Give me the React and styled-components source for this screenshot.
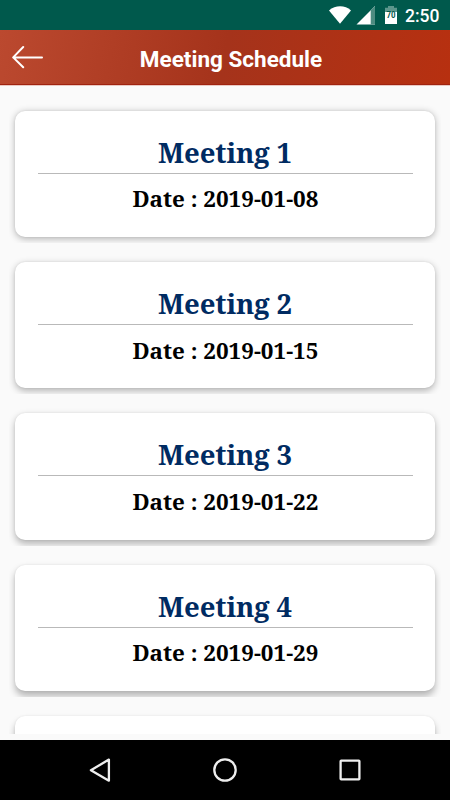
import styled, { createGlobalStyle } from "styled-components";

const meetings = [
  { id: 1, title: "Meeting 1", date: "2019-01-08", drop: 1.5 },
  { id: 2, title: "Meeting 2", date: "2019-01-15", drop: 2.5 },
  { id: 3, title: "Meeting 3", date: "2019-01-22", drop: 3.5 },
  { id: 4, title: "Meeting 4", date: "2019-01-29", drop: 4.5 },
];

const App = () => {
  return (
    <Screen>
      <GlobalStyle />
      <StatusBar>
        <StatusIcons viewBox="0 0 74 30">
          <path d="M1 10.4C7.4 4.9 17 4.9 23 10.4L12 23.7Z" fill="#fff" />
          <path d="M47 6V24.5H28.5Z" fill="#fff" />
          <path d="M47 6V24.5H42.7V10.3Z" fill="#4d8c81" />
          <path d="M57 7.8H60V6H66V7.8H69V12H57Z" fill="#5c968c" />
          <path d="M57 12H69V24H57Z" fill="#fff" />
          <text x="63" y="18.4" textLength="9" lengthAdjust="spacingAndGlyphs">
            70
          </text>
        </StatusIcons>
        <Clock>2:50</Clock>
      </StatusBar>
      <Header>
        <BackIcon viewBox="0 0 32 24">
          <path d="M30 12.4H1.2M11.2 2L1.2 12.4L11.2 22.2" />
        </BackIcon>
        <HeaderTitle>Meeting Schedule</HeaderTitle>
      </Header>
      <List>
        {meetings.map((item) => (
          <CardWrap key={item.id}>
            <Card $drop={item.drop}>
              <Title>{item.title}</Title>
              <Hr />
              <DateText>Date : {item.date}</DateText>
            </Card>
          </CardWrap>
        ))}
        <CardWrap>
          <Card $drop={5} />
        </CardWrap>
      </List>
      <NavBar>
        <NavIcon viewBox="0 0 26 26">
          <path d="M21.9 2.6V23.7L3.9 13.2Z" />
        </NavIcon>
        <NavIcon viewBox="0 0 26 26">
          <circle cx="13" cy="13" r="10.7" />
        </NavIcon>
        <NavIcon viewBox="0 0 26 26">
          <rect x="3.6" y="3.6" width="18.8" height="18.8" rx="0.6" />
        </NavIcon>
      </NavBar>
    </Screen>
  );
};

export default App;

const GlobalStyle = createGlobalStyle`
  * {
    box-sizing: border-box;
  }
  body {
    margin: 0;
    background: #fafafa;
    font-family: Roboto, sans-serif;
  }
`;

const Screen = styled.div`
  display: flex;
  flex-direction: column;
  width: 450px;
  height: 800px;
  overflow: hidden;
  background: #fafafa;
`;

const StatusBar = styled.div`
  flex: none;
  height: 30px;
  display: flex;
  justify-content: flex-end;
  padding-right: 10px;
  background: #00594c;
`;

const StatusIcons = styled.svg`
  width: 74px;
  height: 30px;
  margin-right: 3px;

  text {
    fill: #00594c;
    font: 700 9px Roboto, sans-serif;
    text-anchor: middle;
  }
`;

const Clock = styled.span`
  width: 35px;
  color: #fff;
  font-size: 17.5px;
  font-weight: 500;
  line-height: 32px;
  white-space: nowrap;
`;

const Header = styled.header`
  flex: none;
  height: 55px;
  display: flex;
  align-items: center;
  padding: 0 12px;
  background: linear-gradient(100deg, #bb492f 0%, #a5331b 50%, #b73010 100%);
  border-bottom: 1px solid #a02310;
  box-shadow: 0 1px 0 #e9c9c2;
`;

const BackIcon = styled.svg`
  flex: none;
  width: 32px;
  height: 24px;
  fill: none;
  stroke: #fff;
  stroke-width: 2;
  stroke-linecap: round;
  stroke-linejoin: round;
`;

const HeaderTitle = styled.h1`
  flex: 1;
  margin: 3px 20px 0 0;
  color: #fff;
  font-size: 22.5px;
  font-weight: 700;
  line-height: 30px;
  text-align: center;
`;

const List = styled.main`
  flex: none;
  height: 648.5px;
  padding-top: 18.8px;
  overflow: hidden;
`;

/* crops the card shadow a few pixels under the card */
const CardWrap = styled.div`
  height: 139.2px;
  margin: 0 9px 12.1px;
  padding: 6.9px 6px 0;
  overflow: hidden;
`;

/* the shadow drops further the lower the card sits on the screen */
const Card = styled.section`
  height: 126.3px;
  padding: 22.2px 22.5px 0;
  border-radius: 10px;
  background: #fff;
  box-shadow: 0 ${(props) => props.$drop}px 7px rgba(0, 0, 0, 0.28),
    0 0 2px rgba(0, 0, 0, 0.08);
  font-family: "Noto Serif", "Droid Serif", "DejaVu Serif", serif;
  text-align: center;
`;

const Title = styled.h2`
  margin: 0;
  color: #002b62;
  font-size: 27.5px;
  font-weight: 700;
  letter-spacing: -0.1px;
  line-height: 40px;
  white-space: nowrap;
`;

const Hr = styled.hr`
  height: 1px;
  margin: 0;
  border: none;
  background: #b9b9b9;
`;

const DateText = styled.p`
  margin: 8.4px 0 0 0.8px;
  color: #000;
  font-size: 22.4px;
  font-weight: 700;
  line-height: 34px;
  white-space: nowrap;
`;

const NavBar = styled.nav`
  flex: none;
  height: 60px;
  margin-top: auto;
  display: flex;
  align-items: center;
  justify-content: space-between;
  padding: 0 87px;
  background: #000;
`;

const NavIcon = styled.svg`
  width: 26px;
  height: 26px;
  fill: none;
  stroke: #eee;
  stroke-width: 2.3;
  stroke-linejoin: round;
`;
